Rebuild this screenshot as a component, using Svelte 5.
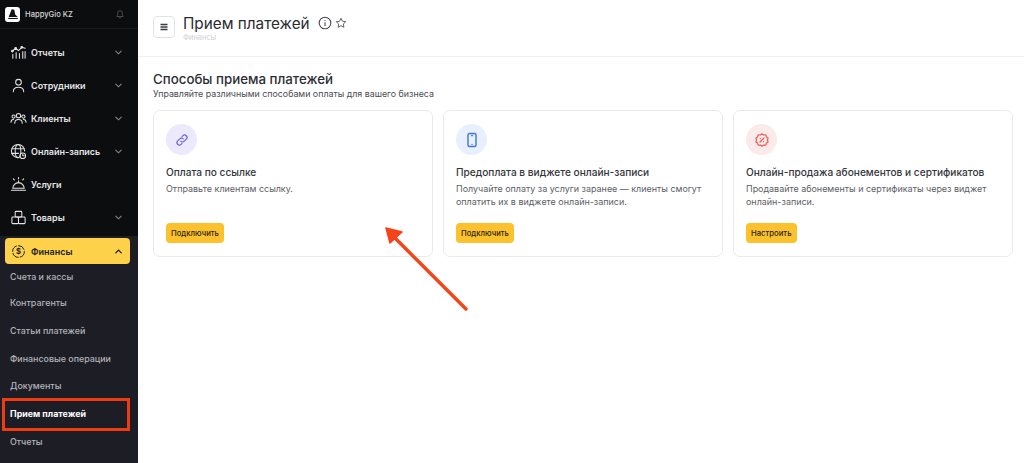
<script>
  const menu = [
    { label: "Отчеты", icon: "chart", arrow: true },
    { label: "Сотрудники", icon: "user", arrow: true },
    { label: "Клиенты", icon: "users", arrow: true },
    { label: "Онлайн-запись", icon: "globe", arrow: true },
    { label: "Услуги", icon: "bell", arrow: false },
    { label: "Товары", icon: "boxes", arrow: true },
  ];
  const submenu = [
    { label: "Счета и кассы", h: 24 },
    { label: "Контрагенты", h: 28 },
    { label: "Статьи платежей", h: 28 },
    { label: "Финансовые операции", h: 28 },
    { label: "Документы", h: 26 },
    { label: "Прием платежей", h: 30, active: true },
    { label: "Отчеты", h: 26 },
  ];
  const cards = [
    {
      title: "Оплата по ссылке",
      text: "Отправьте клиентам ссылку.",
      button: "Подключить",
      tone: "violet",
      icon: "link",
    },
    {
      title: "Предоплата в виджете онлайн-записи",
      text: "Получайте оплату за услуги заранее — клиенты смогут оплатить их в виджете онлайн-записи.",
      button: "Подключить",
      tone: "blue",
      icon: "phone",
    },
    {
      title: "Онлайн-продажа абонементов и сертификатов",
      text: "Продавайте абонементы и сертификаты через виджет онлайн-записи.",
      button: "Настроить",
      tone: "red",
      icon: "percent",
    },
  ];
</script>

<div class="page">
  <aside class="sidebar">
    <div class="brand">
      <div class="logo">
        <svg viewBox="0 0 16 16" width="14" height="14">
          <path d="M6.5 2.5 L9.5 3 L10.5 8.5 L13.5 11.5 L3 11.5 Z" fill="#15161a" />
          <rect x="2.5" y="12.5" width="11" height="1.2" fill="#15161a" />
        </svg>
      </div>
      <span class="brand-name">HappyGio KZ</span>
      <svg class="bell" viewBox="0 0 16 16" width="10" height="10" fill="none" stroke="#55575c" stroke-width="1.3">
        <path d="M3 12 H13 L11.8 10 V6.5 A3.8 3.8 0 0 0 4.2 6.5 V10 Z" />
        <path d="M6.5 14 H9.5" />
      </svg>
    </div>

    <nav class="nav">
      {#each menu as item}
        <div class="item">
          <svg class="icon" viewBox="0 0 18 18" width="17" height="17" fill="none" stroke="#e4e4e6" stroke-width="1.1" stroke-linecap="round" stroke-linejoin="round">
            {#if item.icon === "chart"}
              <path d="M2 8 L6 4.5 L9 7 L12.5 3.5 L16 4.5" />
              <circle cx="2.5" cy="7.5" r="0.9" />
              <circle cx="6" cy="4.5" r="0.9" />
              <circle cx="12.5" cy="3.5" r="0.9" />
              <path d="M3 11 V15 M6.5 9 V15 M10 10 V15 M13.5 8 V15 M16 8 V15" />
            {:else if item.icon === "user"}
              <circle cx="9" cy="5.5" r="3" />
              <path d="M3.5 15.5 C3.5 12 6 10.8 9 10.8 C12 10.8 14.5 12 14.5 15.5" />
            {:else if item.icon === "users"}
              <circle cx="9" cy="6" r="2.3" />
              <circle cx="3.8" cy="7" r="1.7" />
              <circle cx="14.2" cy="7" r="1.7" />
              <path d="M5 14 C5 11 7 10 9 10 C11 10 13 11 13 14" />
              <path d="M1 13 C1 11 2.2 10 3.8 10 M17 13 C17 11 15.8 10 14.2 10" />
            {:else if item.icon === "globe"}
              <path d="M15.5 8.5 A7 7 0 1 0 8.5 15.5" />
              <ellipse cx="8.5" cy="8.5" rx="3" ry="7" />
              <path d="M2 6 H15 M2 11 H9" />
              <circle cx="13.5" cy="13.5" r="3" />
              <path d="M13.5 12 V13.5 H15" />
            {:else if item.icon === "bell"}
              <path d="M3 13 A6 6 0 0 1 15 13 Z" />
              <path d="M1.5 15 H16.5 M9 5 V7" />
              <path d="M9 1.5 V3 M3.5 3 L4.6 4.2 M14.5 3 L13.4 4.2" />
            {:else}
              <rect x="5.5" y="2.5" width="7" height="6" rx="1" />
              <rect x="2" y="8.5" width="7" height="7" rx="1" />
              <rect x="9" y="8.5" width="7" height="7" rx="1" />
            {/if}
          </svg>
          <span>{item.label}</span>
          {#if item.arrow}
            <svg class="chevron" viewBox="0 0 10 10" width="9" height="9" fill="none" stroke="#85878c" stroke-width="1.2" stroke-linecap="round">
              <path d="M2 3.5 L5 6.5 L8 3.5" />
            </svg>
          {/if}
        </div>
      {/each}
    </nav>

    <div class="finance">
      <div class="finance-head">
        <svg viewBox="0 0 18 18" width="15" height="15" fill="none" stroke="#1b1b1d" stroke-width="1.2">
          <circle cx="9" cy="9" r="7" stroke-dasharray="9 1.5" />
          <text x="9" y="12.2" text-anchor="middle" font-size="9" font-weight="700" fill="#1b1b1d" stroke="none" font-family="Inter, sans-serif">$</text>
        </svg>
        <span>Финансы</span>
        <svg class="chevron" viewBox="0 0 10 10" width="9" height="9" fill="none" stroke="#1b1b1d" stroke-width="1.4" stroke-linecap="round">
          <path d="M2 6.5 L5 3.5 L8 6.5" />
        </svg>
      </div>
      {#each submenu as sub}
        <div class="sub" class:active={sub.active} style="height: {sub.h}px">{sub.label}</div>
      {/each}
    </div>
  </aside>

  <main class="main">
    <header class="topbar">
      <button class="burger" aria-label="Меню">
        <svg viewBox="0 0 10 10" width="10" height="10" stroke="#3a3c42" stroke-width="1.3">
          <path d="M1.5 2.5 H8.5 M1.5 5 H8.5 M1.5 7.5 H8.5" />
        </svg>
      </button>
      <div class="heading">
        <div class="title-row">
          <h1>Прием платежей</h1>
          <svg class="info" viewBox="0 0 14 14" width="14" height="14" fill="none" stroke="#4a4c52" stroke-width="1.1">
            <circle cx="7" cy="7" r="5.8" />
            <path d="M7 6.3 V10 M7 4 V4.9" />
          </svg>
          <svg viewBox="0 0 14 14" width="12" height="12" fill="none" stroke="#4a4c52" stroke-width="1" stroke-linejoin="round">
            <path d="M7 1.5 L8.7 5 L12.5 5.5 L9.7 8.1 L10.4 12 L7 10.1 L3.6 12 L4.3 8.1 L1.5 5.5 L5.3 5 Z" />
          </svg>
        </div>
        <div class="crumb">Финансы</div>
      </div>
    </header>

    <section class="content">
      <h2>Способы приема платежей</h2>
      <p class="lead">Управляйте различными способами оплаты для вашего бизнеса</p>

      <div class="cards">
        {#each cards as card}
          <article class="card">
            <div class="badge {card.tone}">
              <svg viewBox="0 0 16 16" width="16" height="16" fill="none" stroke="currentColor" stroke-width="1.2" stroke-linecap="round" stroke-linejoin="round">
                {#if card.icon === "link"}
                  <path d="M6.8 9.2 A2.4 2.4 0 0 0 10.2 9.2 L12.3 7.1 A2.4 2.4 0 0 0 8.9 3.7 L8 4.6" />
                  <path d="M9.2 6.8 A2.4 2.4 0 0 0 5.8 6.8 L3.7 8.9 A2.4 2.4 0 0 0 7.1 12.3 L8 11.4" />
                {:else if card.icon === "phone"}
                  <rect x="4" y="1.5" width="8" height="13" rx="1.6" stroke-width="1.4" />
                  <path d="M7.5 3.6 H8.5 M8 12.3 V12.4" />
                {:else}
                  <path d="M8 1.8 L9.7 3 L11.8 2.9 L12.4 4.9 L14.1 6.1 L13.4 8 L14.1 9.9 L12.4 11.1 L11.8 13.1 L9.7 13 L8 14.2 L6.3 13 L4.2 13.1 L3.6 11.1 L1.9 9.9 L2.6 8 L1.9 6.1 L3.6 4.9 L4.2 2.9 L6.3 3 Z" />
                  <path d="M10 6 L6 10 M6.3 6.3 V6.4 M9.7 9.7 V9.8" />
                {/if}
              </svg>
            </div>
            <h3>{card.title}</h3>
            <p>{card.text}</p>
            <button class="action">{card.button}</button>
          </article>
        {/each}
      </div>
    </section>
  </main>

  <svg class="arrow" viewBox="0 0 1024 463" width="1024" height="463">
    <path d="M466 309 L394 237" stroke="#f5431a" stroke-width="3.4" stroke-linecap="round" />
    <path d="M386 228 L402 232 L390 243 Z" fill="#f5431a" stroke="#f5431a" stroke-width="1.5" stroke-linejoin="round" />
  </svg>
</div>

<style>
  :global(body) {
    margin: 0;
    background: #fff;
  }
  .page {
    position: relative;
    display: flex;
    width: 1024px;
    height: 463px;
    overflow: hidden;
    font-family: Inter, "Noto Sans", sans-serif;
  }
  .sidebar {
    width: 138px;
    flex: none;
    display: flex;
    flex-direction: column;
    background: #0c0d0f;
    color: #e8e8ea;
  }
  .brand {
    height: 28px;
    display: flex;
    align-items: center;
    padding: 0 12px 0 5px;
    border-bottom: 1px solid #17181b;
  }
  .logo {
    width: 15px;
    height: 15px;
    border-radius: 3px;
    background: #fff;
    display: flex;
    align-items: center;
    justify-content: center;
  }
  .brand-name {
    margin-left: 5px;
    font-size: 7.6px;
    font-weight: 500;
    color: #d8d8da;
  }
  .bell {
    margin-left: auto;
    margin-right: 1px;
  }
  .nav {
    padding-top: 7px;
    display: flex;
    flex-direction: column;
  }
  .item {
    height: 33px;
    display: flex;
    align-items: center;
    padding: 0 15px 0 10px;
    font-size: 9px;
    font-weight: 600;
    color: #e6e6e8;
  }
  .item .icon {
    flex: none;
    margin-right: 4px;
  }
  .chevron {
    margin-left: auto;
  }
  .finance {
    flex: 1;
    margin-top: 2px;
    padding-top: 2px;
    background: #1c1d25;
    display: flex;
    flex-direction: column;
  }
  .finance-head {
    height: 26px;
    margin: 0 8px 0 5px;
    flex: none;
    box-sizing: border-box;
    padding: 0 7px 0 6px;
    display: flex;
    align-items: center;
    gap: 5px;
    background: #fdd14a;
    border-radius: 4px;
    color: #1b1b1d;
    font-size: 9px;
    font-weight: 600;
  }
  .sub {
    flex: none;
    display: flex;
    align-items: center;
    padding-left: 10px;
    font-size: 8.9px;
    font-weight: 500;
    color: #b4b5ba;
  }
  .sub.active {
    position: relative;
    color: #fff;
    font-weight: 700;
  }
  /* red marker drawn over the menu row */
  .sub.active::after {
    content: "";
    position: absolute;
    left: 2px;
    top: 0;
    width: 128px;
    height: 33px;
    box-sizing: border-box;
    border: 3px solid #f03a12;
  }
  .main {
    flex: 1;
    min-width: 0;
    display: flex;
    flex-direction: column;
    background: #fff;
  }
  .topbar {
    height: 57px;
    flex: none;
    box-sizing: border-box;
    display: flex;
    padding: 13px 0 0 15px;
    border-bottom: 1px solid #eff0f2;
  }
  .burger {
    width: 22px;
    height: 22px;
    margin-top: 3px;
    padding: 0;
    box-sizing: border-box;
    display: flex;
    align-items: center;
    justify-content: center;
    background: #fff;
    border: 1px solid #dfe2ea;
    border-radius: 4px;
  }
  .heading {
    margin-left: 8px;
  }
  .title-row {
    display: flex;
    align-items: center;
    height: 20px;
  }
  h1 {
    margin: 0;
    font-size: 15.3px;
    font-weight: 400;
    color: #2a2c31;
  }
  .info {
    margin: 0 3px 0 8px;
  }
  .crumb {
    font-size: 7.4px;
    color: #cfd0d6;
  }
  .content {
    padding: 14px 11px 0 15px;
  }
  h2 {
    margin: 0;
    font-size: 13.3px;
    line-height: 16px;
    font-weight: 500;
    color: #2c2e33;
  }
  .lead {
    margin: 0;
    font-size: 8.86px;
    line-height: 14px;
    color: #4b4d53;
  }
  .cards {
    margin-top: 9px;
    display: grid;
    grid-template-columns: repeat(3, 280px);
    gap: 10px;
  }
  .card {
    height: 147px;
    box-sizing: border-box;
    display: flex;
    flex-direction: column;
    align-items: flex-start;
    padding: 13px 12px;
    border: 1px solid #e9eaee;
    border-radius: 7px;
  }
  .badge {
    width: 31px;
    height: 31px;
    border-radius: 50%;
    display: flex;
    align-items: center;
    justify-content: center;
  }
  .violet {
    background: #ebe9fb;
    color: #6d66e8;
  }
  .blue {
    background: #e9f0fd;
    color: #3f6fe0;
  }
  .red {
    background: #fbeaea;
    color: #ec5a55;
  }
  h3 {
    margin: 10px 0 0;
    font-size: 10.13px;
    line-height: 14px;
    font-weight: 500;
    color: #34363b;
  }
  .card p {
    margin: 4px 0 0;
    font-size: 8.95px;
    line-height: 12.5px;
    color: #5c5e64;
  }
  .action {
    margin-top: auto;
    height: 20px;
    padding: 0 5px;
    border: none;
    border-radius: 4px;
    background: #fbc22e;
    color: #2a2410;
    font-family: inherit;
    font-size: 7.7px;
    font-weight: 500;
  }
  .arrow {
    position: absolute;
    left: 0;
    top: 0;
    pointer-events: none;
  }
</style>
